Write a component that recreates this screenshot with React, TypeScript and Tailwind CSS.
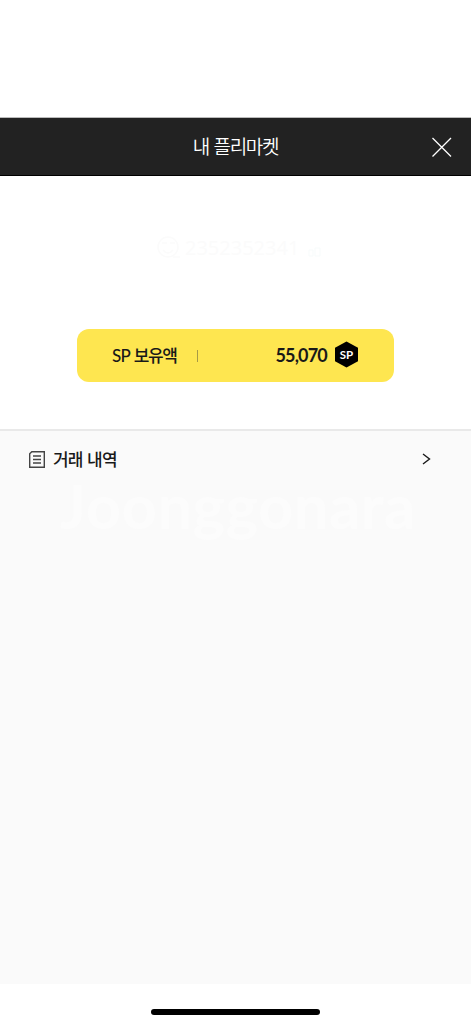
const BALANCE = 55070;
const MEMBER_ID = "2352352341";

export default function App() {
  return (
    <div className="flex h-[1024px] w-full flex-col overflow-hidden bg-white font-['Noto_Sans_CJK_KR','Noto_Sans',sans-serif] text-[#191919]">
      <div className="h-[117px] shrink-0" />
      <Header />

      <main className="flex flex-1 flex-col">
        <section className="flex h-[253px] flex-col items-center">
          <MemberBadge />
          <BalanceCard />
        </section>

        <section className="h-[555px] border-t-2 border-[#e9e9e9] bg-[#fafafa]">
          <HistoryRow />
          <p className="mt-[-17px] pl-[5px] text-center font-['Lato',sans-serif] text-[61px] leading-[72px] font-bold tracking-[0.8px] text-[#fcfcfc]">
            Joonggonara
          </p>
        </section>
      </main>

      {/* Home indicator */}
      <footer className="flex h-10 shrink-0 justify-center pt-[25px]">
        <div className="h-[6px] w-[169px] rounded-full bg-black" />
      </footer>
    </div>
  );
}

function Header() {
  return (
    <header className="grid h-[59px] shrink-0 grid-cols-[50px_1fr_50px] items-center border-t border-b border-t-[#bbb] border-b-black bg-[#222]">
      <span />
      <h1 className="pb-[2px] text-center text-[19px] leading-7 font-[350] tracking-[-1.3px] text-white [word-spacing:1.6px]">
        내 플리마켓
      </h1>
      <button type="button" aria-label="닫기" className="flex pt-px pl-[10px]">
        <svg width="21" height="21" viewBox="0 0 21 21" fill="none" stroke="#fff" strokeWidth="1.3">
          <path d="M1.5 1L20 19.5M20 1L1.5 19.5" />
        </svg>
      </button>
    </header>
  );
}

function MemberBadge() {
  return (
    <div className="mt-[58px] flex h-[28px] items-center self-start pl-[157px] text-[#fbfbfb]">
      <svg width="24" height="26" viewBox="0 0 24 26" fill="none" stroke="currentColor" strokeWidth="1.5">
        <circle cx="11" cy="12" r="10" />
        <path d="M5 8h5M13 8h5M6 15c3 4 7 4 10 0M16 22h7" />
      </svg>
      <span className="ml-[4px] font-['Open_Sans',sans-serif] text-[20px] leading-7 font-medium">{MEMBER_ID}</span>
      <svg className="mt-2 ml-[9px] text-[#f7fbfb]" width="13" height="12" viewBox="0 0 13 12" fill="none" stroke="currentColor">
        <path d="M1 4h4v6H1zM7 2h5v8H7z" />
      </svg>
    </div>
  );
}

function BalanceCard() {
  return (
    <div className="mt-[67px] flex h-[53px] w-[317px] items-center rounded-xl bg-[#fee650] pr-9 pl-[35px]">
      <span className="w-[85px] pb-px text-[17px] leading-6 font-medium tracking-[-1.3px] [word-spacing:1px]">
        <span className="font-['Lato',sans-serif] tracking-[-0.7px]">SP</span> 보유액
      </span>
      <span className="h-3 w-px bg-[#a79a45]" />
      <strong className="ml-auto pb-[2px] font-['Lato',sans-serif] text-[18px] leading-6 font-bold tracking-[-0.8px]">
        {BALANCE.toLocaleString("en-US")}
      </strong>
      <svg className="mb-[2px] ml-2" width="23" height="27" viewBox="0 0 23 27">
        <path d="M11.5 0.4L23 6.8V20.2L11.5 26.6L0 20.2V6.8Z" fill="#000" />
        <text x="11.5" y="17.6" textAnchor="middle" fill="#fff" className="font-['Lato',sans-serif] text-[11.5px] font-bold">
          SP
        </text>
      </svg>
    </div>
  );
}

function HistoryRow() {
  return (
    <button type="button" className="flex h-[56px] w-full items-center pr-[40px] pl-[29px]">
      <svg className="mt-px" width="16" height="17" viewBox="0 0 16 17" fill="none" stroke="#444" strokeWidth="1.4">
        <path d="M2.8 0.7H15.3V16.3H0.7V2.8Z" />
        <path d="M4 5H12M4 8.5H12M4 12H12" />
      </svg>
      <span className="ml-2 text-[17px] leading-6 font-medium tracking-[-0.8px] [word-spacing:1.4px]">거래 내역</span>
      <svg className="ml-auto" width="9" height="12" viewBox="0 0 9 12" fill="none" stroke="#191919" strokeWidth="1.4">
        <path d="M1 1L7.5 6L1 11" />
      </svg>
    </button>
  );
}
